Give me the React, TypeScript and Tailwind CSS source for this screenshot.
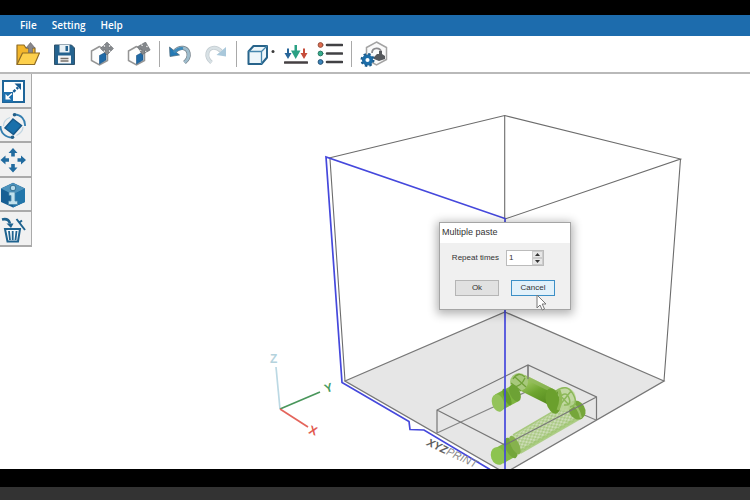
import { useState, type ReactNode } from "react";

const CubeArrowIcon = ({ rotated = false }: { rotated?: boolean }) => (
  <svg viewBox="0 0 24 24" className="w-6 h-6" fill="none">
    <path d="M9.500 4.500 1.500 9v9.500l8 4.500 8-4.500V9z" fill="#fdfdfd" stroke="#959595" strokeWidth="1.500" />
    <path d="M9.500 13.500 16 10v8l-6.500 4z" fill="#1f69a6" stroke="#164f80" strokeWidth=".6" />
    <g transform={rotated ? "rotate(15 17.5 6)" : undefined}>
      <path
        d="m17 0 3 3h-1.500v2h2V3.500l3 3-3 3V8h-2v2H20l-3 3-3-3h1.500V8h-2v1.500l-3-3 3-3V5h2V3H14z"
        fill="#85898d"
        stroke="#606468"
        strokeWidth=".5"
      />
    </g>
  </svg>
);

const OpenIcon = () => (
  <svg viewBox="0 0 24 24" className="w-6 h-6" fill="none" strokeLinejoin="round">
    <path d="M1 22.500V3h7l2 3h9v6" fill="#f3b62b" stroke="#8f6c25" strokeWidth="1.200" />
    <path d="M14.500.500 10 6h2.500v8h4V6H19z" fill="#88868a" stroke="#66656a" strokeWidth=".6" />
    <path d="M1 22.500 6.500 11H23.500L18.500 22.500z" fill="#fdd04c" stroke="#8f6c25" strokeWidth="1.200" />
  </svg>
);

const SaveIcon = () => (
  <svg viewBox="0 0 24 24" className="w-6 h-6">
    <path d="M1.500 3h17l3 3v16.500h-20z" fill="#25638f" stroke="#30536b" />
    <path d="M6.500 3h10v7.500h-10z" fill="#e9f1f5" />
    <path d="M12.500 4h2.500v5h-2.500z" fill="#25638f" />
    <path d="M5 13.500h13v8H5z" fill="#f7f7f7" />
    <path d="M7.500 16.500h8M7.500 19h8" stroke="#77706a" strokeWidth="1.300" />
  </svg>
);

const UndoIcon = () => (
  <svg viewBox="0 0 24 24" className="w-6 h-6">
    <path d="M7 9c5-5 12-4 13.500 2 .8 4-1 7-4 9.500" fill="none" stroke="#75818a" strokeWidth="4.200" />
    <path d="M7 9c5-5 12-4 13.500 2 .8 4-1 7-4 9.500" fill="none" stroke="#9ebccc" strokeWidth="2.800" />
    <path d="M1.500 5 2 14.500l9.500-1.500z" fill="#2479b4" stroke="#47677b" strokeWidth=".7" />
    <path d="M6 10.500c3-3.500 6-4.500 9-4" fill="none" stroke="#3d8abb" strokeWidth="2.600" />
  </svg>
);

const RedoIcon = () => (
  <svg viewBox="0 0 24 24" className="w-6 h-6">
    <path d="M17 9C12 4 5 5 3.500 11c-.8 4 1 7 4 9.500" fill="none" stroke="#c3ccd1" strokeWidth="4" />
    <path d="M17 9C12 4 5 5 3.500 11c-.8 4 1 7 4 9.500" fill="none" stroke="#d8e1e5" strokeWidth="2.400" />
    <path d="M22 5v9.500L12.500 13z" fill="#a9c8db" />
  </svg>
);

const ViewIcon = () => (
  <svg viewBox="0 0 30 24" className="w-[30px] h-6">
    <path d="m3.500 9.500 5-5.500h13.500v11.500l-5.500 6.500H3.500z" fill="#edf6fa" stroke="#27638a" strokeWidth="2" strokeLinejoin="round" />
    <path d="M3.500 9.500h13V22M16.500 9.500 22 4" fill="none" stroke="#4586ad" strokeWidth="1.300" />
    <circle cx="28" cy="9.500" r="1.500" fill="#3b3b3b" />
  </svg>
);

const LandIcon = () => (
  <svg viewBox="0 0 24 24" className="w-6 h-6">
    <path d="M3 6.500h2V11h2.500L4 17 .500 11H3z" fill="#28669a" />
    <path d="M10.500 3h2.500v5.500h3.500L11.700 17 7 8.500h3.500z" fill="#2ba184" />
    <path d="M19 6.500h2V11h2.500L20 17l-3.500-6H19z" fill="#c64d3b" />
    <path d="M1 20.500h22" stroke="#454043" strokeWidth="2.600" strokeLinecap="round" />
  </svg>
);

const ListIcon = () => (
  <svg viewBox="0 0 26 24" className="w-[26px] h-6" strokeLinecap="round">
    <circle cx="3.500" cy="3" r="2.400" fill="#e06b4d" stroke="#96503e" />
    <circle cx="3.500" cy="11.500" r="2.400" fill="#35ad8c" stroke="#2c7967" />
    <circle cx="3.500" cy="20" r="2.400" fill="#3a85bb" stroke="#265477" />
    <path d="M10 3h15M10 11.500h15M10 20h15" stroke="#414144" strokeWidth="2.600" />
  </svg>
);

const PrintSettingsIcon = () => (
  <svg viewBox="0 0 28 28" className="w-7 h-7" fill="none">
    <path d="m16.500 2 10 5.500v12L16.500 25l-10-5.500v-12z" fill="#fafafa" stroke="#a3a3a3" strokeWidth="1.500" />
    <path d="M12 13c0-6 9-6 9-1v4" stroke="#8b8b8e" strokeWidth="1.800" />
    <path d="m14 17 3-3h2v-3h3v3l3 2v3l-6 2-5-2z" fill="#55585c" />
    <circle cx="7.500" cy="20" r="3.800" fill="#fff" stroke="#1c6da8" strokeWidth="3.500" />
    <circle cx="7.500" cy="20" r="6" stroke="#1c5c8c" strokeWidth="2" strokeDasharray="2.500 2.210" />
  </svg>
);

const ScaleIcon = () => (
  <svg viewBox="0 0 26 26" className="w-[26px] h-[26px]">
    <path d="M3 3h21v21H3z" fill="#fff" stroke="#1e6599" strokeWidth="2" />
    <path d="M3 14h10v10H3z" fill="#1d70ae" />
    <path d="m10 17 8-7.500" stroke="#165b91" strokeWidth="2.400" strokeDasharray="3 1.500" />
    <path d="M21 5.500v6.500l-6.500-6.500z" fill="#165b91" />
    <path d="M5.500 16v5.500h5.500z" fill="#fff" />
    <path d="m8 19 4-3.500" stroke="#fff" strokeWidth="1.600" />
  </svg>
);

const RotateIcon = () => (
  <svg viewBox="0 0 26 28" className="w-[26px] h-7" fill="none">
    <path d="m13 7 8.500 6.500-8 9L5 16z" fill="#1970ab" stroke="#17598a" strokeWidth="1.500" />
    <path d="M14.500 2.500c6.500 0 11 5 10.500 11.500M12.500 25.500C5.500 25.500.500 21 .500 14" stroke="#347eaf" strokeWidth="1.800" />
    <path d="M10 5.500c-4 1.500-6.500 5-6.500 8.500M16.500 23.500c4-2 6.500-5.500 6.500-8.500" stroke="#c1d5e1" strokeWidth="1.200" />
    <circle cx="14.500" cy="2.800" r="1.800" fill="#245f88" />
    <circle cx="12.500" cy="25.200" r="1.800" fill="#245f88" />
  </svg>
);

const MoveIcon = () => (
  <svg viewBox="0 0 26 26" className="w-[26px] h-[26px]" fill="#216b9f">
    <path d="m13 1 4.500 5h-2.700v3.500h-3.600V6H8.500zM13 25.500l4.500-5h-2.700V17h-3.600v3.500H8.500zM.500 13l5-4.500v2.700H9v3.600H5.500v2.700zM26 13l-5-4.500v2.700h-3.500v3.600H21v2.700z" />
  </svg>
);

const InfoIcon = () => (
  <svg viewBox="0 0 26 26" className="w-[26px] h-[26px]">
    <path d="M13 .800 25 6.500v13.500L13 25.500 1 20V6.500z" fill="#185f94" />
    <path d="m1 6.500 12 6 12-6L13 1z" fill="#4e94bd" />
    <path d="M13 12.500 25 6.500v13.500L13 25.500z" fill="#2376aa" />
    <circle cx="13" cy="6" r="2.800" fill="#b8dbea" stroke="#346f91" />
    <path d="M9 10h6v9h2.500v3.500h-9V19H11v-5.500H9z" fill="#c1e1ed" stroke="#4986a9" strokeWidth=".8" />
  </svg>
);

const DeleteIcon = () => (
  <svg viewBox="0 0 26 26" className="w-[26px] h-[26px]" fill="none" stroke="#1f638f" strokeWidth="2">
    <path d="M5 12h15l-2 12.500H7.500z" fill="#f7fafc" />
    <path d="M9 14l1 9M12.700 14v9M16.500 14l-1 9" strokeWidth="1.800" />
    <path d="m16.500 2 8.500 11M20 5l2-1.500" strokeWidth="2" />
    <path d="M2 2.500c4-1 7 .5 8 4" strokeWidth="2.500" />
    <path d="M6.500 6.500h7L11 11z" fill="#1f638f" stroke="none" />
  </svg>
);

function ToolButton({ label, children }: { label: string; children: ReactNode }) {
  return (
    <button aria-label={label} className="flex items-center justify-center shrink-0">
      {children}
    </button>
  );
}

const Divider = () => <span className="w-px h-[26px] bg-[#a9a9a9]" />;

const sideTools = [
  { label: "Scale", icon: ScaleIcon },
  { label: "Rotate", icon: RotateIcon },
  { label: "Move", icon: MoveIcon },
  { label: "Info", icon: InfoIcon },
  { label: "Remove", icon: DeleteIcon },
];

function Scene() {
  return (
    <svg viewBox="32 74 718 395" preserveAspectRatio="xMinYMin slice" className="w-full h-full" fill="none">
      <defs>
        <linearGradient id="rod" x1="0" y1="0" x2="1" y2="1">
          <stop offset="0" stopColor="#a3ca66" />
          <stop offset=".5" stopColor="#6ea52f" />
          <stop offset="1" stopColor="#588c20" />
        </linearGradient>
        <pattern id="mesh" width="5" height="4" patternUnits="userSpaceOnUse" patternTransform="rotate(-30)">
          <path d="M0 0l5 4M5 0L0 4" stroke="#8bb858" strokeWidth=".6" />
        </pattern>
      </defs>

      {/* Build plate */}
      <path d="M505 312 664 381 505 473 345 381z" fill="#e6e6e6" stroke="#777" strokeWidth="1.300" />

      {/* Build volume */}
      <g stroke="#6c6c6c" strokeWidth="1.100">
        <path d="M329 158 504.700 115.500 680.500 159 505 219" />
        <path d="M504.700 115.500V219M680.500 159 664 381M330 159 345 381" />
      </g>

      {/* Selection box, far edges */}
      <path d="M437 433 528 391 596 420M528 365v26" stroke="#858585" strokeWidth="1.200" />

      {/* Model */}
      <g>
        <path d="M574 411 512 447" stroke="#c8dbae" strokeWidth="20" opacity=".85" />
        <path d="M574 411 512 447" stroke="url(#mesh)" strokeWidth="18" />
        <path d="M579 418 520 452" stroke="#98c365" strokeWidth="4" opacity=".6" />
        <path d="M566 404 513 435" stroke="#a8c97f" strokeWidth="1.500" />
        <ellipse cx="577" cy="410" rx="8" ry="10" fill="#75a63a" transform="rotate(-30 577 410)" />
        <path d="M571 403q8 4 10 15" stroke="#9dc36c" strokeWidth="2" />
        <circle cx="564" cy="399" r="12" fill="#bbd596" opacity=".85" />
        <path d="M556 391q11-8 17 3t-3 13M559 398q7-8 10 0t-5 7M556 391l13 14M571 391l-11 14" stroke="#8cb85a" strokeWidth="1.500" />
        <path d="M521 382 555 399" stroke="url(#rod)" strokeWidth="16" />
        <path d="M527 378 557 393" stroke="#94bb60" strokeWidth="4" opacity=".7" />
        <ellipse cx="553" cy="401" rx="7" ry="13" fill="#6ba02d" transform="rotate(-14 553 401)" />
        <path d="M559 390q4 9-1 20" stroke="#8fb955" strokeWidth="3" />
        <circle cx="519" cy="382" r="9" fill="#a7c87c" />
        <path d="M513 379q5-8 12-2M511 383l10 8M515 377l11 10M513 387q8 0 12-9" stroke="#70a138" strokeWidth="1.300" />
        <path d="m499 402 15-8" stroke="#7db43e" strokeWidth="17" />
        <ellipse cx="498" cy="403" rx="6" ry="9" fill="#94c35b" transform="rotate(-18 498 403)" />
        <ellipse cx="507" cy="397" rx="3" ry="9" fill="#649d2b" transform="rotate(-24 507 397)" />
        <ellipse cx="515" cy="393" rx="5" ry="9" fill="#6da235" transform="rotate(-24 515 393)" />
        <path d="m499 456 14-8" stroke="#83b946" strokeWidth="17" />
        <ellipse cx="498" cy="456" rx="7" ry="9" fill="#8dc44f" transform="rotate(-20 498 456)" />
        <ellipse cx="511" cy="448" rx="5" ry="11" fill="#74a63b" transform="rotate(-26 511 448)" />
        <ellipse cx="515" cy="445" rx="4" ry="10" fill="#86b24d" transform="rotate(-26 515 445)" />
      </g>

      {/* Selection box, near edges */}
      <path d="M437 433V410L528 365 596.500 397V420M437 410 505 445 596.500 397M528 365v14" stroke="#777" strokeWidth="1.200" />

      {/* Highlighted plane */}
      <path
        d="M505 473V218.500L326 157 342 382.500 409 421.500 410 429.500 424 430 490 469.500"
        stroke="#4548dc"
        strokeWidth="1.700"
      />
      <text
        transform="translate(426 445) rotate(25)"
        fill="#606060"
        className="text-[11px] italic font-['Liberation_Sans',sans-serif]"
      >
        <tspan className="font-bold">XYZ</tspan>
        <tspan fill="#888">PRINT</tspan>
      </text>

      {/* Axes */}
      <g strokeWidth="1.700" className="text-[12px] font-bold font-['Liberation_Sans',sans-serif]">
        <path d="M280 409 276 367" stroke="#bcd9e4" />
        <path d="M280 409 320 392" stroke="#49965b" />
        <path d="M280 409 308 427" stroke="#e4655c" />
        <text x="270" y="363" fill="#b5d3dd">Z</text>
        <text transform="translate(326 393) rotate(-18)" fill="#4a9c5f">Y</text>
        <text transform="translate(308 433) rotate(20)" fill="#e2594f">X</text>
      </g>
    </svg>
  );
}

function PasteDialog() {
  const [times, setTimes] = useState(1);

  return (
    <div
      role="dialog"
      aria-labelledby="paste-title"
      className="absolute left-[407px] top-[148px] w-[132px] border border-[#a5a5a5] bg-[#f0f0f0] text-[8px] leading-3 text-[#333] shadow-[0_2px_9px_2px_rgba(0,0,0,0.3)] font-['Liberation_Sans',sans-serif]"
    >
      <h2 id="paste-title" className="h-5 px-0.5 bg-white text-[9px] leading-[18px]">
        Multiple paste
      </h2>
      <div className="flex items-center justify-end pt-[7px] pr-[26px] gap-[7px]">
        <label htmlFor="repeat">Repeat times</label>
        <div className="flex h-4 border border-[#bbb] bg-white">
          <input
            id="repeat"
            value={times}
            onChange={(e) => setTimes(Number(e.target.value) || 0)}
            className="w-[25px] px-0.5 bg-white outline-none"
          />
          <div className="flex flex-col w-[11px] bg-[#e7e7e7]">
            <button
              aria-label="Increase"
              onClick={() => setTimes(times + 1)}
              className="flex-1 flex items-center justify-center border border-[#ccc]"
            >
              <svg viewBox="0 0 5 3" className="w-[5px] h-[3px]"><path d="M0 3 2.500 0 5 3z" fill="#333" /></svg>
            </button>
            <button
              aria-label="Decrease"
              onClick={() => setTimes(Math.max(1, times - 1))}
              className="flex-1 flex items-center justify-center border border-[#ccc]"
            >
              <svg viewBox="0 0 5 3" className="w-[5px] h-[3px]"><path d="M0 0h5L2.500 3z" fill="#333" /></svg>
            </button>
          </div>
        </div>
      </div>
      <div className="flex justify-center gap-3 pt-3.5 pb-[13px]">
        <button className="w-11 h-4 border border-[#b5b5b5] bg-[#e1e1e1]">Ok</button>
        <button className="w-11 h-4 border border-[#3c8fc6] bg-[#e2f1fa]">Cancel</button>
      </div>
      <svg viewBox="0 0 11 17" className="absolute left-24 top-[71px] w-[11px] h-[17px]">
        <path d="M1 1v13l3-3 2.300 5 2.200-1-2.300-5H10z" fill="#fff" stroke="#777" />
      </svg>
    </div>
  );
}

export default function App() {
  return (
    <div className="min-h-screen flex flex-col bg-black pt-[15px] font-['Open_Sans',sans-serif]">
      {/* Menu bar */}
      <nav className="h-[21px] px-5 pb-0.5 flex items-center gap-[15px] bg-[#1d6cad] text-white text-[10px] leading-4 font-semibold">
        <a href="#">File</a>
        <a href="#">Setting</a>
        <a href="#">Help</a>
      </nav>

      {/* Toolbar */}
      <header className="h-[38px] pl-4 flex items-center gap-2 bg-white border-b-2 border-[#b9b9b9]">
        <div className="flex items-center gap-[13px]">
          <ToolButton label="Open"><OpenIcon /></ToolButton>
          <ToolButton label="Save"><SaveIcon /></ToolButton>
          <ToolButton label="Import"><CubeArrowIcon /></ToolButton>
          <ToolButton label="Export"><CubeArrowIcon rotated /></ToolButton>
        </div>
        <Divider />
        <div className="flex items-center gap-3">
          <ToolButton label="Undo"><UndoIcon /></ToolButton>
          <ToolButton label="Redo"><RedoIcon /></ToolButton>
        </div>
        <Divider />
        <div className="flex items-center gap-[9px]">
          <ToolButton label="View"><ViewIcon /></ToolButton>
          <ToolButton label="Land"><LandIcon /></ToolButton>
          <ToolButton label="Object list"><ListIcon /></ToolButton>
        </div>
        <Divider />
        <ToolButton label="Print settings"><PrintSettingsIcon /></ToolButton>
      </header>

      <main className="flex-1 flex bg-white">
        <aside className="w-8 h-[173px] flex flex-col shrink-0 border-r border-[#aaa] bg-[#f1f1f1]">
          {sideTools.map((tool) => (
            <button
              key={tool.label}
              aria-label={tool.label}
              className="flex-1 flex items-center pt-0.5 border-b-2 border-[#aaa]"
            >
              <tool.icon />
            </button>
          ))}
        </aside>
        <section className="relative flex-1 overflow-hidden">
          <div className="absolute inset-0">
            <Scene />
          </div>
          <PasteDialog />
        </section>
      </main>

      <footer className="pt-[18px]">
        <div className="h-[13px] bg-[#333]" />
      </footer>
    </div>
  );
}
